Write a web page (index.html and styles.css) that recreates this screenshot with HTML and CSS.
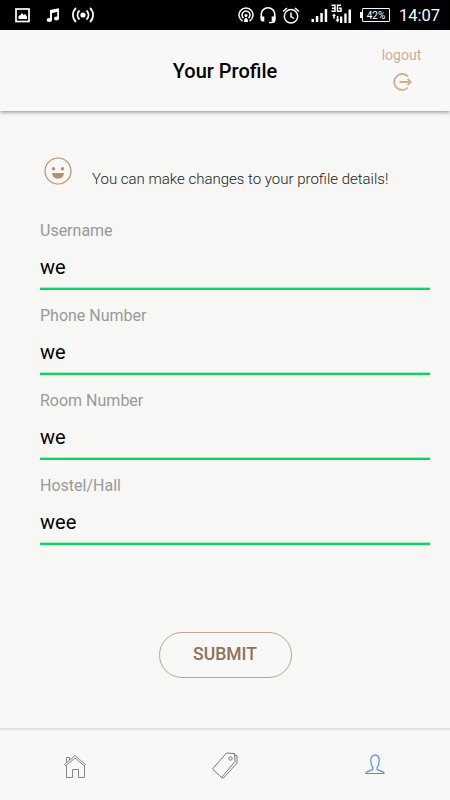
FILE: index.html
```html
<!DOCTYPE html>
<html lang="en">
<head>
    <meta charset="UTF-8">
    <meta name="viewport" content="width=device-width, initial-scale=1.0">
    <title>Your Profile</title>
    <link rel="stylesheet" href="styles.css">
</head>
<body>

<div class="status-bar">
    <div class="status-left">
        <svg width="15" height="15" viewBox="0 0 15 15"><rect x="1" y="1" width="13" height="12.5" fill="none" stroke="#fff" stroke-width="1.7"/><path d="M3.500 11V8l2-1 1.500-2 1.500 2 1.500-1 2 2.500V11z" fill="#fff"/></svg>
        <svg class="music" width="14" height="15" viewBox="0 0 14 15" fill="#fff"><path d="M4 2l9-1.700v10.200h-1.800V4L6 5v7H4z"/><ellipse cx="3.300" cy="12" rx="2.700" ry="2"/><ellipse cx="10.500" cy="10.500" rx="2.500" ry="2"/></svg>
        <svg class="cast" width="22" height="16" viewBox="0 0 22 16" fill="none" stroke="#fff" stroke-width="1.700"><circle cx="11" cy="8" r="2.600" fill="#fff" stroke="none"/><path d="M7.500 3.500a6 6 0 0 0 0 9M14.500 3.500a6 6 0 0 1 0 9M4 1a9.500 9.500 0 0 0 0 14M18 1a9.500 9.500 0 0 1 0 14"/></svg>
    </div>
    <div class="status-right">
        <svg width="16" height="16" viewBox="0 0 16 16" fill="none" stroke="#fff" stroke-width="1.500"><path d="M4.500 14a7 7 0 1 1 7 0M5.500 11.200a4 4 0 1 1 5 0"/><circle cx="8" cy="8.500" r="1.500" fill="#fff" stroke="none"/><path d="M6 15q0-4 2-4t2 4z" fill="#fff" stroke="none"/></svg>
        <svg class="headset" width="16" height="17" viewBox="0 0 16 17" fill="none" stroke="#fff" stroke-width="1.600"><path d="M1.300 11V7a6.700 6.200 0 0 1 13.400 0v6q0 2.500-3 2.500H9"/><path d="M.5 9.500h3.800v5H2.500q-2 0-2-2zM11.700 9.500h3.800v3q0 2-2 2h-1.800z" fill="#fff" stroke="none"/></svg>
        <svg class="alarm" width="18" height="17" viewBox="0 0 18 17" fill="none" stroke="#fff" stroke-width="1.500"><circle cx="9" cy="9.300" r="6.700"/><path d="M9 5.500v4l3 2M1 4.500L5 1M17 4.500L13 1"/></svg>
        <svg class="signal" width="17" height="15" viewBox="0 0 17 15" fill="#fff"><path d="M.5 11H3v3H.500zM4.800 8h2.500v6H4.800zM9.300 5h2.500v9H9.300zM13.700 1h2.500v13h-2.500z"/></svg>
        <svg class="signal-3g" width="21" height="20" viewBox="0 0 21 20"><path d="M.5 1.200H4v6H.500M1 4.200h3M10 1.200H6.500v6H10v-3H8" fill="none" stroke="#fff" stroke-width="1.500"/><path d="M1 12l2-2.500L5 12H3.800v2.500H2.200V12zM4.500 15.500h1.300V12h1.600v3.500h1.200L6.500 18.500zM9 12.500h2.300V19H9zM13.300 9.500h2.300V19h-2.300zM17.500 5.500h2.500V19h-2.500z" fill="#fff"/></svg>
        <div class="battery">42%</div>
        <div class="clock">14:07</div>
    </div>
</div>

<header class="header">
    <h1>Your Profile</h1>
    <a class="logout">
        <span>logout</span>
        <svg width="20" height="20" viewBox="0 0 20 20" fill="none" stroke="#cfae8f" stroke-width="1.800"><path d="M16 4.500a8 8 0 1 0 0 11M7.500 10H18.500M15.600 6.800l3.200 3.200-3.200 3.200"/></svg>
    </a>
</header>

<main class="content">
    <div class="intro">
        <svg width="28" height="28" viewBox="0 0 28 28"><circle cx="14" cy="14" r="13" fill="none" stroke="#b8906c" stroke-width="1.200"/><g fill="#b8906c"><circle cx="9.500" cy="11.800" r="1.700"/><circle cx="18.500" cy="11.800" r="1.700"/><path d="M8 16h12q-.5 5.700-6 5.700T8 16z"/></g></svg>
        <p>You can make changes to your profile details!</p>
    </div>

    <form class="profile-form">
        <label class="field"><span>Username</span><input type="text" value="we"></label>
        <label class="field"><span>Phone Number</span><input type="text" value="we"></label>
        <label class="field"><span>Room Number</span><input type="text" value="we"></label>
        <label class="field"><span>Hostel/Hall</span><input type="text" value="wee"></label>
        <button type="button" class="submit-btn">SUBMIT</button>
    </form>
</main>

<nav class="tabs">
    <a class="tab">
        <svg width="24" height="26" viewBox="0 0 24 26" fill="none" stroke="#858585"><path d="M1.500 12.500L12 3.500l10.500 9-1.200 1.300L12 6l-9.300 7.800zM3.500 13.500v12h6v-8h6v8h6v-12M3.500 10.500v-5h3V8"/></svg>
    </a>
    <a class="tab">
        <svg width="28" height="28" viewBox="0 0 28 28" fill="none" stroke="#777"><path d="M1.500 18L15.500 2l8 .5.500 8-13.500 16zM24 4l2 .500v7.500L12.500 27l-2-.5"/><circle cx="19.500" cy="7.500" r="1.700"/></svg>
    </a>
    <a class="tab active">
        <svg width="20" height="22" viewBox="0 0 20 22" fill="none" stroke="#4f8df5" stroke-width="1.200"><path d="M1 19.500q.3-2 3.500-2.700 3-.7 3.300-1.500.2-1-.3-2.500-1.500-2-1.700-6.300Q5.800 1.200 10 1.200t4.200 5.300q-.2 4.300-1.700 6.300-.5 1.500-.3 2.500.3.800 3.300 1.500 3.200.7 3.500 2.700z"/></svg>
    </a>
</nav>

</body>
</html>
```

FILE: styles.css
```css
* {
    margin: 0;
    padding: 0;
    box-sizing: border-box;
}

body {
    font-family: Roboto, Arial, sans-serif;
    display: flex;
    flex-direction: column;
    height: 100vh;
    overflow: hidden;
    background-color: #f7f7f5;
}

svg {
    display: block;
    flex-shrink: 0;
}

.status-bar {
    display: flex;
    justify-content: space-between;
    height: 30px;
    padding: 0 10px 0 15px;
    background-color: #000;
    color: #fff;
}

.status-left, .status-right {
    display: flex;
    align-items: center;
}

.music {
    margin-left: 16px;
}

.cast {
    margin-left: 12px;
}

.headset {
    margin-left: 6px;
}

.alarm {
    margin-left: 6px;
}

.signal {
    margin-left: 11px;
}

.signal-3g {
    margin-left: 3px;
    margin-bottom: 3px;
}

.battery {
    position: relative;
    width: 28px;
    height: 14px;
    margin-left: 10px;
    border: 1px solid #fff;
    border-radius: 1px;
    font-size: 10px;
    line-height: 13px;
    text-align: center;
}

.battery::before {
    content: "";
    position: absolute;
    left: -3px;
    top: 3px;
    width: 2px;
    height: 6px;
    background-color: #fff;
}

.clock {
    width: 42px;
    margin-left: 8px;
    font-size: 16.5px;
    text-align: right;
    white-space: nowrap;
}

.header {
    display: grid;
    grid-template-columns: 97px 1fr 97px;
    align-items: center;
    height: 81px;
    background-color: #f8f8f8;
    box-shadow: 0 1px 4px rgba(0, 0, 0, 0.45);
}

.header h1 {
    grid-column: 2;
    font-size: 20px;
    font-weight: 500;
    text-align: center;
}

.logout {
    display: flex;
    flex-direction: column;
    align-items: center;
    gap: 9px;
    padding-bottom: 2px;
    color: #cfae8f;
    font-size: 14px;
    line-height: 16px;
}

.content {
    flex: 1;
    padding: 46px 20px 0 40px;
}

.intro {
    display: flex;
    align-items: flex-start;
    height: 64px;
    padding-left: 4px;
}

.intro p {
    margin: 12px 0 0 20px;
    font-size: 15px;
    font-weight: 300;
    line-height: 20px;
    color: #222;
    white-space: nowrap;
}

.profile-form {
    display: flex;
    flex-direction: column;
}

.field {
    display: flex;
    flex-direction: column;
    height: 85px;
}

.field span {
    font-size: 16px;
    line-height: 20px;
    color: #999;
}

.field input {
    height: 49px;
    padding-top: 5px;
    border: none;
    border-bottom: 2px solid #0bd55c;
    outline: none;
    background: transparent;
    box-shadow: inset 0 -1px 0 rgba(11, 213, 92, 0.35);
    font-family: inherit;
    font-size: 20px;
    color: #000;
}

.submit-btn {
    align-self: center;
    width: 133px;
    height: 46px;
    margin: 71px 20px 0 0;
    padding-bottom: 2px;
    border: 1px solid #b9a592;
    border-radius: 23px;
    background: transparent;
    font-family: inherit;
    font-size: 17.5px;
    font-weight: 500;
    color: #8c735a;
}

.tabs {
    display: grid;
    grid-template-columns: repeat(3, 1fr);
    height: 72px;
    border-top: 2px solid #e2e2e0;
    background-color: #f8f8f8;
}

.tab {
    display: flex;
    align-items: center;
    justify-content: center;
}
```
